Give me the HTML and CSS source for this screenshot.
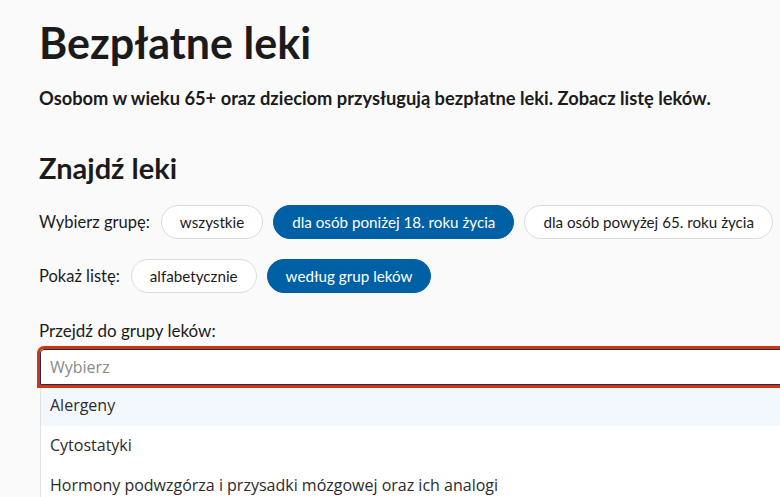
FILE: index.html
```html
<!DOCTYPE html>
<html lang="pl">
<head>
    <meta charset="UTF-8">
    <meta name="viewport" content="width=device-width, initial-scale=1.0">
    <title>Bezpłatne leki</title>
    <link rel="stylesheet" href="styles.css">
</head>
<body>
    <div class="container">
        <h1>Bezpłatne leki</h1>
        <p class="lead">Osobom w wieku 65+ oraz dzieciom przysługują bezpłatne leki. Zobacz listę leków.</p>

        <h2>Znajdź leki</h2>
        <div class="filter-row">
            <span class="filter-label">Wybierz grupę:</span>
            <button class="pill">wszystkie</button>
            <button class="pill active">dla osób poniżej 18. roku życia</button>
            <button class="pill">dla osób powyżej 65. roku życia</button>
        </div>
        <div class="filter-row">
            <span class="filter-label">Pokaż listę:</span>
            <button class="pill">alfabetycznie</button>
            <button class="pill active">według grup leków</button>
        </div>

        <label class="select-label" for="group">Przejdź do grupy leków:</label>
        <div class="combo">
            <div class="combo-input" id="group">Wybierz</div>
            <ul class="combo-menu">
                <li class="highlighted">Alergeny</li>
                <li>Cytostatyki</li>
                <li>Hormony podwzgórza i przysadki mózgowej oraz ich analogi</li>
            </ul>
        </div>
    </div>
</body>
</html>
```

FILE: styles.css
```css
html, body {
    margin: 0;
    background-color: #fafafa;
    overflow: hidden;
}
body {
    font-family: "Lato", "Noto Sans", sans-serif;
    color: #1b1b1b;
}
.container {
    padding: 0 0 0 39px;
    width: 820px;
}
h1 {
    font-size: 43px;
    font-weight: 700;
    margin: 17px 0 0;
    line-height: 52px;
}
.lead {
    font-size: 18.3px;
    font-weight: 700;
    margin: 16px 0 0;
    line-height: 26px;
}
h2 {
    font-size: 29px;
    font-weight: 700;
    margin: 39px 0 0;
    line-height: 36px;
}
.filter-row {
    display: flex;
    align-items: center;
    gap: 10px;
    margin-top: 19px;
    white-space: nowrap;
}
.filter-row + .filter-row {
    margin-top: 20px;
}
.filter-label {
    font-size: 16.5px;
    margin-right: 1px;
}
.pill {
    height: 34px;
    padding: 0 18px;
    border: 1px solid #dcdcdc;
    border-radius: 17px;
    background-color: #fff;
    color: #1b1b1b;
    font-family: inherit;
    font-size: 15.2px;
    white-space: nowrap;
    cursor: pointer;
}
.pill.active {
    background-color: #0060a6;
    border-color: #0060a6;
    color: #fff;
}
.select-label {
    display: block;
    font-size: 17px;
    line-height: 20px;
    margin-top: 28px;
}
.combo {
    margin-top: 8px;
    margin-left: 1px;
}
.combo-input {
    height: 34px;
    line-height: 34px;
    padding-left: 9px;
    border: 1px solid #1c2d5a;
    border-radius: 4px 0 0 0;
    outline: 3px solid #d4350f;
    background-color: #fff;
    font-family: "Open Sans", sans-serif;
    font-size: 16px;
    color: #8a8a8a;
}
.combo-menu {
    list-style: none;
    margin: 0;
    padding: 0;
    background-color: #fff;
    border-left: 1px solid #e2e2e2;
    border-top: 1px solid #e2e2e2;
    font-family: "Open Sans", sans-serif;
    font-size: 16px;
    color: #2b2b2b;
}
.combo-menu li {
    height: 40px;
    line-height: 39px;
    padding-left: 9px;
}
.combo-menu li.highlighted {
    background-color: #f3f8fd;
}
```
